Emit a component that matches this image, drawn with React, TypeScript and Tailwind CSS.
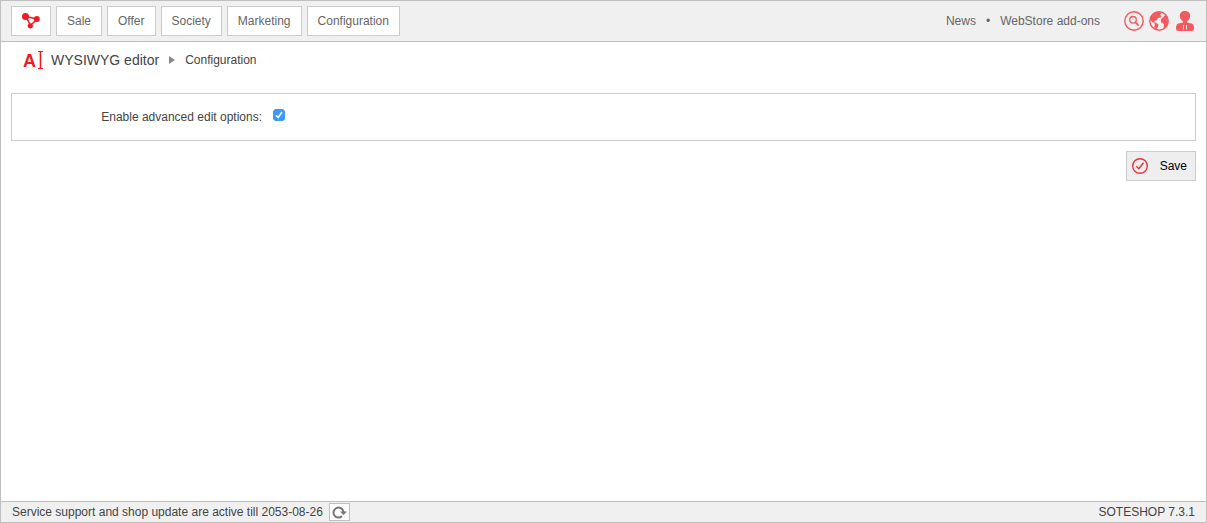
import { useState } from 'react';

const menu = ['Sale', 'Offer', 'Society', 'Marketing', 'Configuration'];

const NetworkIcon = () => (
    <svg width="20" height="16" viewBox="0 0 20 16" fill="#ed1c24" aria-hidden="true">
        <path d="M5 3.500 16 6 9.500 12.500Z" fill="none" stroke="#ed1c24" strokeWidth="1.500" />
        <circle cx="4.500" cy="3.500" r="3.500" />
        <circle cx="15.800" cy="6" r="3" />
        <circle cx="9.300" cy="12.800" r="2.600" />
    </svg>
);

const SearchIcon = () => (
    <svg width="20" height="20" viewBox="0 0 20 20" fill="none" stroke="#f05a60" aria-hidden="true">
        <circle cx="10" cy="10" r="9.200" strokeWidth="1.400" />
        <circle cx="9" cy="8.800" r="3.300" strokeWidth="1.300" />
        <path d="m11.500 11.300 2.500 2.700" strokeWidth="1.800" strokeLinecap="round" />
    </svg>
);

const GlobeIcon = () => (
    <svg width="20" height="20" viewBox="0 0 20 20" aria-hidden="true">
        <circle cx="10" cy="10" r="9.200" fill="#f7f1f1" stroke="#f05a60" strokeWidth="1.400" />
        <path d="M1 9C1.500 4 5 1 10 1l2.500.5L11 4l2 1-1.500 1.500-2.500.5-1 2-2.500 1v1.500H3.500L2.500 10Z" fill="#f05a60" />
        <path d="m5 11 2.500 1 2 1.500-.5 2.500-2 2.500L5 16l1-2Z" fill="#f05a60" />
        <path d="m12 8 2.500-2L16 4l2 2 1 4-1 4-2 3-1.500-.5.500-3-1-1.500-2-.5Z" fill="#f05a60" />
    </svg>
);

const UserIcon = () => (
    <svg width="18" height="20" viewBox="0 0 18 20" aria-hidden="true">
        <path
            d="M9 0C6 0 3.800 1.800 3.800 4.500c0 2.500 1.200 4.500 3.200 6v1L2.500 12.500C.8 13 0 14.200 0 17c0 2.200.7 3 2 3h14c1.300 0 2-.8 2-3 0-2.800-.8-4-2.500-4.500L11 11.500v-1c2-1.500 3.200-3.500 3.200-6C14.200 1.800 12 0 9 0Z"
            fill="#f05a60"
        />
        <path d="M7.500 14v4.500M10.500 14v4.500" fill="none" stroke="#f0f0f0" strokeWidth=".9" />
    </svg>
);

const CheckIcon = () => (
    <svg width="16" height="16" viewBox="0 0 16 16" fill="none" stroke="#e8323e" aria-hidden="true">
        <circle cx="8" cy="8" r="7.300" strokeWidth="1.400" />
        <path d="m4.300 8.300 2.500 2.400 4.700-6" strokeWidth="1.500" />
    </svg>
);

const RefreshIcon = () => (
    <svg width="15" height="14" viewBox="0 0 15 14" aria-hidden="true">
        <path d="M10 11.200A5 5 0 1 1 11.500 7" fill="none" stroke="#777" strokeWidth="2" />
        <path d="M8 6.500h7L11.500 10Z" fill="#777" />
    </svg>
);

const App = () => {
    const [advanced, setAdvanced] = useState(true);

    return (
        <div className="flex min-h-screen flex-col border border-[#bfbfbf] bg-white font-['Liberation_Sans',Arial,sans-serif] text-xs text-[#444]">
            <header className="flex items-center justify-between border-b border-[#bfbfbf] bg-[#f0f0f0] py-[5px] pr-3 pl-2.5 text-[#666]">
                <nav className="flex gap-[5px]">
                    <button
                        aria-label="Dashboard"
                        className="flex h-[30px] w-10 items-center justify-center border border-[#ccc] bg-white"
                    >
                        <NetworkIcon />
                    </button>
                    {menu.map((item) => (
                        <button key={item} className="h-[30px] border border-[#ccc] bg-white px-2.5">
                            {item}
                        </button>
                    ))}
                </nav>

                <div className="flex items-center">
                    <a href="#news">News</a>
                    <span className="mx-2.5">•</span>
                    <a href="#add-ons">WebStore add-ons</a>
                    <div className="ml-6 flex items-center gap-[5px]">
                        <button aria-label="Search"><SearchIcon /></button>
                        <button aria-label="Language"><GlobeIcon /></button>
                        <button aria-label="Account" className="ml-0.5"><UserIcon /></button>
                    </div>
                </div>
            </header>

            <main className="grow px-2.5">
                <div className="flex h-9 items-center pl-3">
                    <span className="flex items-center gap-0.5 text-[#ed1c24]" aria-hidden="true">
                        <span className="pt-0.5 text-lg leading-5 font-bold">A</span>
                        <svg width="5" height="20" viewBox="0 0 5 20" fill="none" stroke="#ed1c24">
                            <path d="M0 1.500h5M0 18.500h5" />
                            <path d="M2.500 1.500v17" strokeWidth="1.600" />
                        </svg>
                    </span>
                    <h1 className="ml-2 text-sm">WYSIWYG editor</h1>
                    <svg className="ml-2.5" width="6" height="8" viewBox="0 0 6 8" fill="#888" aria-hidden="true">
                        <path d="M0 0v8l6-4Z" />
                    </svg>
                    <span className="ml-2.5">Configuration</span>
                </div>

                <form onSubmit={(e) => e.preventDefault()}>
                    <div className="mt-[15px] flex h-12 items-center border border-[#ccc]">
                        <label htmlFor="advanced" className="w-[250px] text-right">
                            Enable advanced edit options:
                        </label>
                        <span className="relative mb-1 ml-[11px] flex">
                            <input
                                id="advanced"
                                type="checkbox"
                                checked={advanced}
                                onChange={(e) => setAdvanced(e.target.checked)}
                                className="peer size-3 appearance-none rounded-[3px] border border-[#aaa] checked:border-[#3b99fc] checked:bg-[#3b99fc]"
                            />
                            <svg
                                className="pointer-events-none absolute inset-0 hidden peer-checked:block"
                                viewBox="0 0 12 12"
                                fill="none"
                                stroke="#fff"
                                strokeWidth="1.600"
                                aria-hidden="true"
                            >
                                <path d="m3 6.300 2.200 2.200L9 3" />
                            </svg>
                        </span>
                    </div>
                    <div className="mt-2.5 flex justify-end">
                        <button
                            type="submit"
                            className="flex h-[30px] items-center gap-3 border border-[#ccc] bg-[#eee] pr-2 pl-[5px] text-black"
                        >
                            <CheckIcon />
                            Save
                        </button>
                    </div>
                </form>
            </main>

            <footer className="flex h-[21px] items-center justify-between border-t border-[#bfbfbf] bg-[#f0f0f0] px-[11px]">
                <div className="flex items-center gap-1.5">
                    <span>Service support and shop update are active till 2053-08-26</span>
                    <button
                        aria-label="Refresh"
                        className="flex h-[18px] w-[21px] items-center justify-center border border-[#bfbfbf] bg-white"
                    >
                        <RefreshIcon />
                    </button>
                </div>
                <span>SOTESHOP 7.3.1</span>
            </footer>
        </div>
    );
};

export default App;
